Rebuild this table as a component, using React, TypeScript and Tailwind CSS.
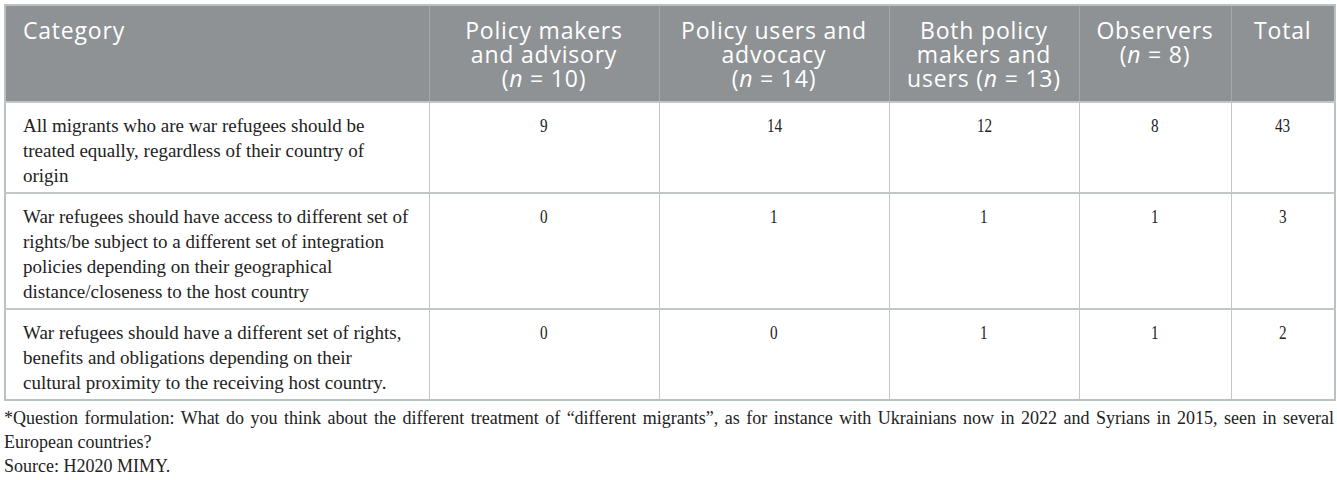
const headers = [
  { lines: [<>Category</>], align: "text-left" },
  {
    lines: [<>Policy makers</>, <>and advisory</>, <>(<i>n</i> = 10)</>],
    align: "text-center",
  },
  {
    lines: [<>Policy users and</>, <>advocacy</>, <>(<i>n</i> = 14)</>],
    align: "text-center",
  },
  {
    lines: [<>Both policy</>, <>makers and</>, <>users (<i>n</i> = 13)</>],
    align: "text-center",
  },
  { lines: [<>Observers</>, <>(<i>n</i> = 8)</>], align: "text-center" },
  { lines: [<>Total</>], align: "text-center" },
];

const rows = [
  {
    lines: [
      "All migrants who are war refugees should be",
      "treated equally, regardless of their country of",
      "origin",
    ],
    values: ["9", "14", "12", "8", "43"],
  },
  {
    lines: [
      "War refugees should have access to different set of",
      "rights/be subject to a different set of integration",
      "policies depending on their geographical",
      "distance/closeness to the host country",
    ],
    values: ["0", "1", "1", "1", "3"],
  },
  {
    lines: [
      "War refugees should have a different set of rights,",
      "benefits and obligations depending on their",
      "cultural proximity to the receiving host country.",
    ],
    values: ["0", "0", "1", "1", "2"],
  },
];

const serif = { fontFamily: "'Liberation Serif', serif" };

const App = () => {
  return (
    <div className="w-[1337px] h-[480px] bg-white pl-[4px] pr-[3px] pt-[4px]">
      <table className="w-[1330px] table-fixed border-collapse border-2 border-[#b9c2c2]">
        <colgroup>
          <col className="w-[424px]" />
          <col className="w-[230px]" />
          <col className="w-[230px]" />
          <col className="w-[190px]" />
          <col className="w-[152px]" />
          <col className="w-[104px]" />
        </colgroup>
        <thead>
          <tr className="h-[97px] bg-[#8e9294]">
            {headers.map((h, i) => (
              <th
                key={i}
                className={`${h.align} align-top border-l border-[#a3a7a9] px-[6px] pt-[12px] text-[23px] leading-[24px] tracking-[0.8px] font-normal text-white first:border-l-0 first:pl-[17px]`}
                style={{ fontFamily: "'Open Sans', Lato, sans-serif" }}
              >
                {h.lines.map((l, j) => (
                  <div key={j} className="whitespace-nowrap">
                    {l}
                  </div>
                ))}
              </th>
            ))}
          </tr>
        </thead>
        <tbody>
          {rows.map((row, r) => (
            <tr key={r} className="border-t-2 border-[#c3c6c7]">
              <td
                className="align-top pl-[17px] pr-[10px] pt-[10px] pb-[4px] text-[19px] leading-[25px] text-[#222]"
                style={serif}
              >
                {row.lines.map((l, i) => (
                  <div key={i} className="whitespace-nowrap">
                    {l}
                  </div>
                ))}
              </td>
              {row.values.map((v, i) => (
                <td
                  key={i}
                  className="align-top border-l border-[#c3c6c7] pt-[10px] text-center text-[19px] leading-[25px] text-[#222]"
                  style={serif}
                >
                  <span className="inline-block scale-x-[0.8]">{v}</span>
                </td>
              ))}
            </tr>
          ))}
        </tbody>
      </table>
      <div className="pt-[5px] text-[18px] leading-[24px] text-[#222]" style={serif}>
        <div className="text-justify [text-align-last:justify]">
          *Question formulation: What do you think about the different treatment of “different migrants”, as for
          instance with Ukrainians now in 2022 and Syrians in 2015, seen in several
        </div>
        <div>European countries?</div>
        <div>Source: H2020 MIMY.</div>
      </div>
    </div>
  );
};

export default App;
